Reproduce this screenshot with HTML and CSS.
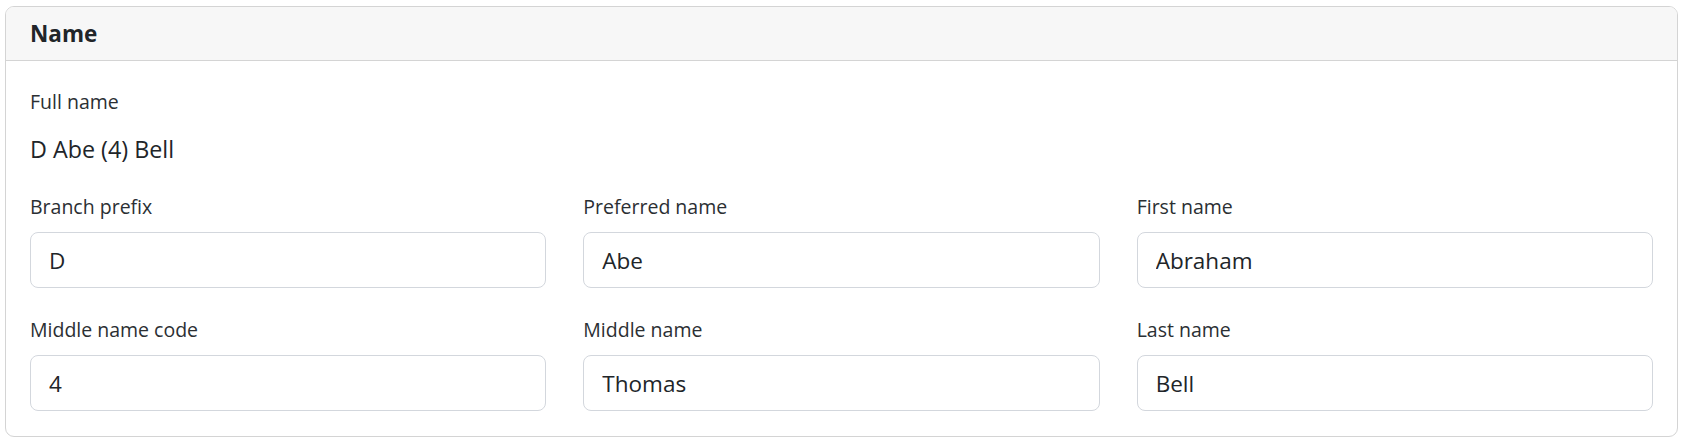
FILE: index.html
```html
<!DOCTYPE html>
<html lang="en">
<head>
<meta charset="utf-8">
<title>Name</title>
<link rel="stylesheet" href="styles.css">
</head>
<body>
<div class="card">
  <div class="card-header">Name</div>
  <div class="card-body">
    <div class="full">
      <div class="label">Full name</div>
      <div class="full-value">D Abe (4) Bell</div>
    </div>
    <div class="grid">
      <div class="field">
        <label class="label" for="f1">Branch prefix</label>
        <input class="input" id="f1" type="text" value="D">
      </div>
      <div class="field">
        <label class="label" for="f2">Preferred name</label>
        <input class="input" id="f2" type="text" value="Abe">
      </div>
      <div class="field">
        <label class="label" for="f3">First name</label>
        <input class="input" id="f3" type="text" value="Abraham">
      </div>
      <div class="field">
        <label class="label" for="f4">Middle name code</label>
        <input class="input" id="f4" type="text" value="4">
      </div>
      <div class="field">
        <label class="label" for="f5">Middle name</label>
        <input class="input" id="f5" type="text" value="Thomas">
      </div>
      <div class="field">
        <label class="label" for="f6">Last name</label>
        <input class="input" id="f6" type="text" value="Bell">
      </div>
    </div>
  </div>
</div>
</body>
</html>
```
FILE: styles.css
```css
html, body {
  margin: 0;
  padding: 0;
  background: #ffffff;
}
body {
  font-family: "Open Sans", "Noto Sans", "Liberation Sans", sans-serif;
  color: #212529;
  padding: 6px 5px 4px 5px;
}
.card {
  border: 1px solid #d4d4d4;
  border-radius: 9px;
  overflow: hidden;
  background: #fff;
}
.card-header {
  background: #f7f7f7;
  border-bottom: 1px solid #d4d4d4;
  padding: 10px 24px;
  font-size: 22.5px;
  line-height: 33px;
  font-weight: 700;
}
.card-body {
  padding: 26px 24px 25px 24px;
}
.label {
  display: block;
  font-size: 19.5px;
  line-height: 29px;
  color: #2b2f33;
}
.full-value {
  margin-top: 16px;
  font-size: 23.3px;
  line-height: 34px;
}
.full {
  margin-bottom: 26px;
}
.grid {
  display: grid;
  grid-template-columns: repeat(3, 1fr);
  column-gap: 37px;
  row-gap: 27px;
}
.field .label {
  margin-bottom: 11px;
}
.input {
  display: block;
  box-sizing: border-box;
  width: 100%;
  height: 56px;
  margin: 0;
  padding: 0 18px;
  border: 1px solid #d3d7dd;
  border-radius: 8px;
  font-family: inherit;
  font-size: 22.5px;
  color: #212529;
  background: #fff;
  outline: none;
}
```
